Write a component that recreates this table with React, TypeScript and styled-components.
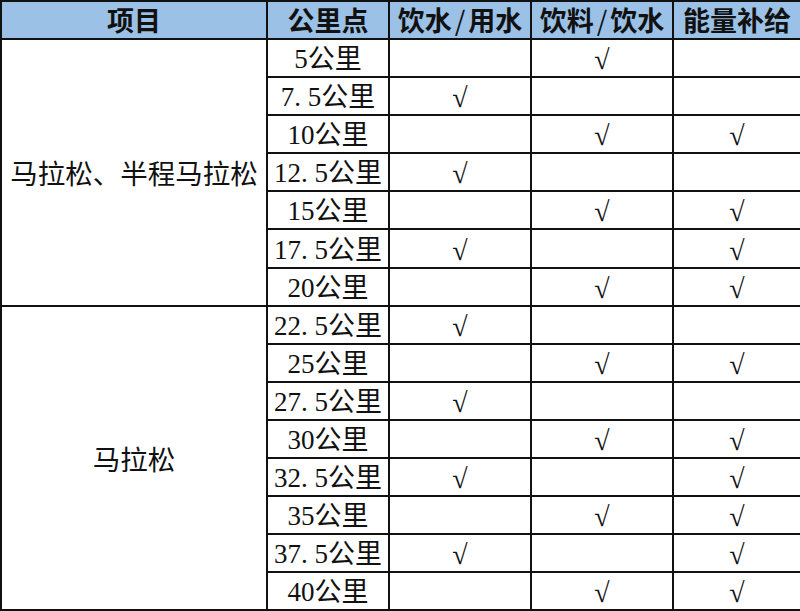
import React from "react";
import styled, { createGlobalStyle } from "styled-components";

const Global = createGlobalStyle`
  html, body { margin: 0; padding: 0; background: #ffffff; }
  body { font-family: "Liberation Serif", "Noto Sans CJK SC", serif; }
`;

const Table = styled.table`
  width: 800px;
  border-collapse: collapse;
  table-layout: fixed;
  color: #111111;
  background: #ffffff;
`;

const HeadRow = styled.tr`
  height: 38px;
  background: #9bc2e6;
`;

const Row = styled.tr`
  height: 38.1px;
`;

const Th = styled.th`
  border: 2px solid #111111;
  padding: 0;
  font-family: "Noto Sans CJK SC", sans-serif;
  font-weight: 600;
  font-size: 27px;
  line-height: 30px;
  text-align: center;
  white-space: nowrap;
  overflow: hidden;
`;

const Slash = styled.span`
  display: inline-block;
  margin: 0 3px;
  font-weight: 400;
`;

const GroupCell = styled.td`
  border: 2px solid #111111;
  padding: 0;
  font-family: "Noto Sans CJK SC", sans-serif;
  font-size: 27.5px;
  text-align: center;
  vertical-align: middle;
  white-space: nowrap;
`;

const KmCell = styled.td`
  border: 2px solid #111111;
  padding: 2px 0 0 0;
  font-family: "Liberation Serif", "Noto Sans CJK SC", serif;
  font-size: 27px;
  line-height: 30px;
  text-align: center;
  white-space: nowrap;
`;

const Dot = styled.span`
  display: inline-block;
  width: 0.5em;
  text-align: left;
`;

const MarkCell = styled.td`
  border: 2px solid #111111;
  padding: 4px 0 0 0;
  font-family: "Liberation Serif", "DejaVu Serif", serif;
  font-weight: 700;
  font-size: 28px;
  line-height: 30px;
  text-align: center;
`;

type Item = { km: string; water: boolean; drink: boolean; energy: boolean };

const group1: Item[] = [
  { km: "5", water: false, drink: true, energy: false },
  { km: "7.5", water: true, drink: false, energy: false },
  { km: "10", water: false, drink: true, energy: true },
  { km: "12.5", water: true, drink: false, energy: false },
  { km: "15", water: false, drink: true, energy: true },
  { km: "17.5", water: true, drink: false, energy: true },
  { km: "20", water: false, drink: true, energy: true },
];

const group2: Item[] = [
  { km: "22.5", water: true, drink: false, energy: false },
  { km: "25", water: false, drink: true, energy: true },
  { km: "27.5", water: true, drink: false, energy: false },
  { km: "30", water: false, drink: true, energy: true },
  { km: "32.5", water: true, drink: false, energy: true },
  { km: "35", water: false, drink: true, energy: true },
  { km: "37.5", water: true, drink: false, energy: true },
  { km: "40", water: false, drink: true, energy: true },
];

const Km: React.FC<{ value: string }> = ({ value }) => {
  const parts = value.split(".");
  return (
    <KmCell>
      {parts[0]}
      {parts.length > 1 && (
        <>
          <Dot>.</Dot>
          {parts[1]}
        </>
      )}
      公里
    </KmCell>
  );
};

const Mark: React.FC<{ on: boolean }> = ({ on }) => <MarkCell>{on ? "√" : ""}</MarkCell>;

const renderGroup = (items: Item[], label: string) =>
  items.map((it, i) => (
    <Row key={label + it.km}>
      {i === 0 && <GroupCell rowSpan={items.length}>{label}</GroupCell>}
      <Km value={it.km} />
      <Mark on={it.water} />
      <Mark on={it.drink} />
      <Mark on={it.energy} />
    </Row>
  ));

export default function App() {
  return (
    <>
      <Global />
      <Table>
        <colgroup>
          <col style={{ width: 266 }} />
          <col style={{ width: 122 }} />
          <col style={{ width: 142 }} />
          <col style={{ width: 142 }} />
          <col style={{ width: 128 }} />
        </colgroup>
        <thead>
          <HeadRow>
            <Th>项目</Th>
            <Th>公里点</Th>
            <Th>
              饮水<Slash>/</Slash>用水
            </Th>
            <Th>
              饮料<Slash>/</Slash>饮水
            </Th>
            <Th>能量补给</Th>
          </HeadRow>
        </thead>
        <tbody>
          {renderGroup(group1, "马拉松、半程马拉松")}
          {renderGroup(group2, "马拉松")}
        </tbody>
      </Table>
    </>
  );
}
